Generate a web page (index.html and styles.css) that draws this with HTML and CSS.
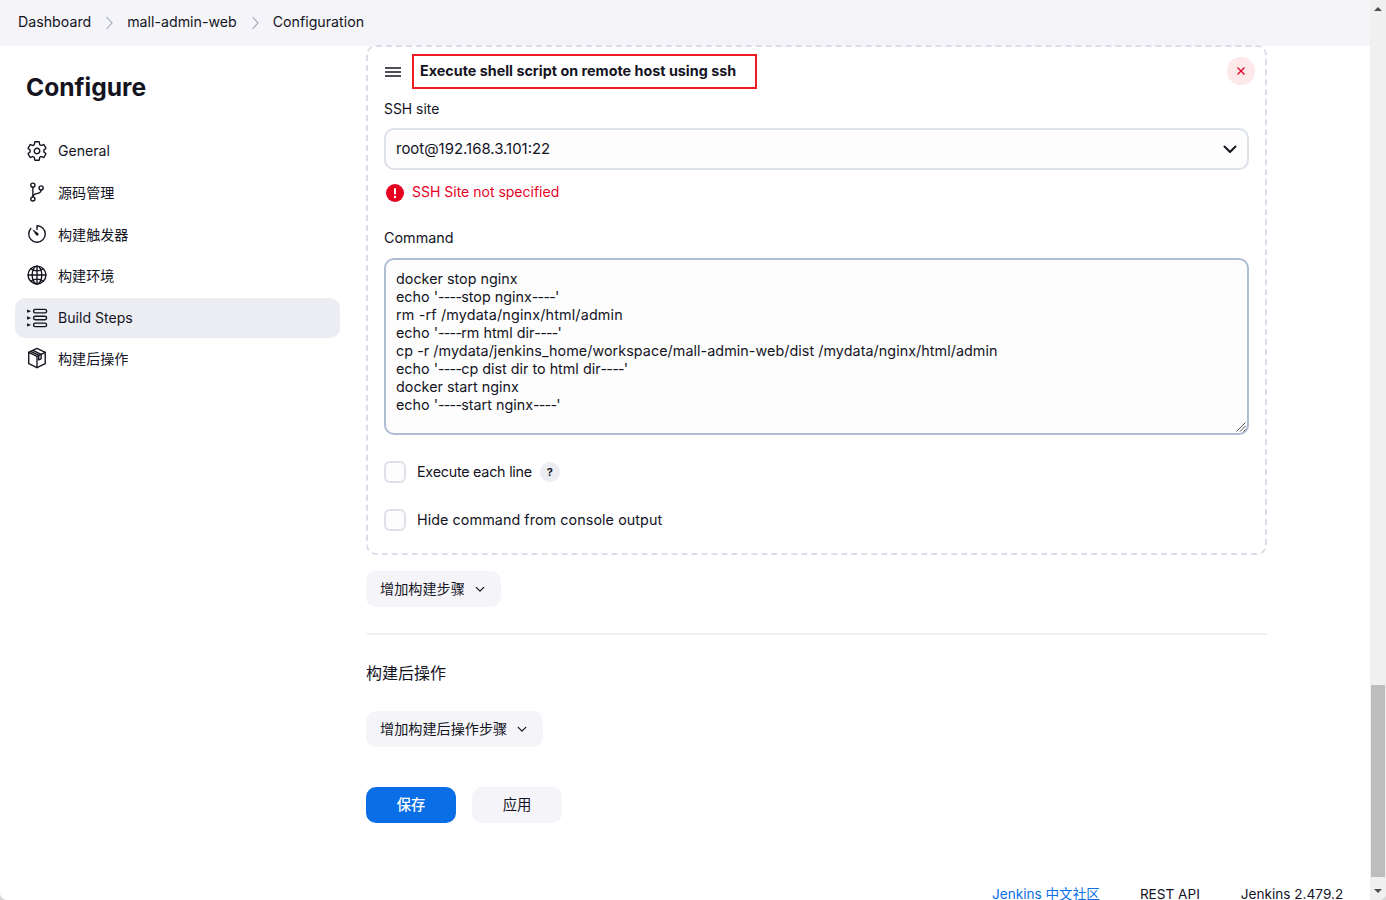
FILE: index.html
```html
<!DOCTYPE html>
<html lang="zh-CN">
<head>
<meta charset="utf-8">
<title>mall-admin-web Config</title>
<link rel="stylesheet" href="styles.css">
</head>
<body>
<div class="window">
  <div class="page">
    <nav class="crumbs">
      <a class="crumb">Dashboard</a>
      <svg class="crumb-sep" viewBox="0 0 512 512"><path d="M176 64l176 192-176 192"/></svg>
      <a class="crumb">mall-admin-web</a>
      <svg class="crumb-sep" viewBox="0 0 512 512"><path d="M176 64l176 192-176 192"/></svg>
      <a class="crumb">Configuration</a>
    </nav>
    <div class="columns">
      <aside class="sidebar">
        <h1 class="title">Configure</h1>
        <ul class="menu">
          <li class="menu-item">
            <svg class="menu-icon" viewBox="0 0 512 512"><path d="M262.29 192.31a64 64 0 1057.4 57.4 64.13 64.13 0 00-57.4-57.4zM416.39 256a154.34 154.34 0 01-1.53 20.79l45.21 35.46a10.81 10.81 0 012.45 13.75l-42.77 74a10.81 10.81 0 01-13.14 4.59l-44.9-18.08a16.11 16.11 0 00-15.17 1.75A164.48 164.48 0 01325 400.8a15.94 15.94 0 00-8.82 12.14l-6.73 47.89a11.08 11.08 0 01-10.68 9.17h-85.54a11.11 11.11 0 01-10.69-8.87l-6.72-47.82a16.07 16.07 0 00-9-12.22 155.3 155.3 0 01-21.46-12.57 16 16 0 00-15.11-1.71l-44.89 18.07a10.81 10.81 0 01-13.14-4.58l-42.77-74a10.8 10.8 0 012.45-13.75l38.21-30a16.05 16.05 0 006-14.08c-.36-4.17-.58-8.33-.58-12.5s.21-8.27.58-12.35a16 16 0 00-6.07-13.94l-38.19-30A10.81 10.81 0 0149.48 186l42.77-74a10.81 10.81 0 0113.14-4.59l44.9 18.08a16.11 16.11 0 0015.17-1.75A164.48 164.48 0 01187 111.2a15.94 15.94 0 008.82-12.14l6.73-47.89A11.08 11.08 0 01213.23 42h85.54a11.11 11.11 0 0110.69 8.87l6.72 47.82a16.07 16.07 0 009 12.22 155.3 155.3 0 0121.46 12.57 16 16 0 0015.11 1.71l44.89-18.07a10.81 10.81 0 0113.14 4.58l42.77 74a10.8 10.8 0 01-2.45 13.75l-38.21 30a16.05 16.05 0 00-6.05 14.08c.33 4.14.55 8.3.55 12.47z"/></svg>
            General
          </li>
          <li class="menu-item">
            <svg class="menu-icon" viewBox="0 0 512 512"><circle cx="160" cy="96" r="48"/><circle cx="160" cy="416" r="48"/><path d="M160 368V144"/><circle cx="352" cy="160" r="48"/><path d="M352 208c0 128-192 48-192 160"/></svg>
            源码管理
          </li>
          <li class="menu-item">
            <svg class="menu-icon" viewBox="0 0 512 512"><path d="M112.91 128A191.85 191.85 0 0064 254c-1.18 106.35 85.65 193.8 192 194 106.2.2 192-85.83 192-192 0-104.54-83.55-189.61-187.5-192a4.36 4.36 0 00-4.5 4.37V152"/><path class="solid" d="M233.38 278.63l-79-113a8.13 8.13 0 0111.32-11.32l113 79a32.5 32.5 0 01-37.25 53.26 33.21 33.21 0 01-8.07-7.94z"/></svg>
            构建触发器
          </li>
          <li class="menu-item">
            <svg class="menu-icon" viewBox="0 0 512 512"><path d="M256 48C141.13 48 48 141.13 48 256s93.13 208 208 208 208-93.13 208-208S370.87 48 256 48z"/><path d="M256 48c-58.07 0-112.67 93.13-112.67 208S197.93 464 256 464s112.67-93.13 112.67-208S314.07 48 256 48z"/><path d="M117.33 117.33c38.24 27.15 86.38 43.34 138.67 43.34s100.43-16.19 138.67-43.34M394.67 394.67c-38.24-27.15-86.38-43.34-138.67-43.34s-100.43 16.19-138.67 43.34"/><path d="M256 48v416M464 256H48"/></svg>
            构建环境
          </li>
          <li class="menu-item menu-item-active">
            <svg class="menu-icon" viewBox="0 0 512 512"><rect x="176" y="56" width="304" height="80" rx="40"/><rect x="176" y="216" width="304" height="80" rx="40"/><rect x="176" y="376" width="304" height="80" rx="40"/><path class="solid" d="M24 56l96 40-96 40zM24 216l96 40-96 40zM24 376l96 40-96 40z"/></svg>
            Build Steps
          </li>
          <li class="menu-item">
            <svg class="menu-icon" viewBox="0 0 512 512"><path d="M256 32l192 92v264l-192 92-192-92V124z"/><path d="M64 124l192 92 192-92M256 216v264"/><path d="M160 78l192 92v104l-56 26V190L104 100"/></svg>
            构建后操作
          </li>
        </ul>
      </aside>
      <main class="content">
        <section class="step">
          <div class="step-head">
            <svg class="handle" viewBox="0 0 16 10"><path d="M0 1h16M0 5h16M0 9h16"/></svg>
            <div class="step-title">Execute shell script on remote host using ssh</div>
            <button class="close" type="button">
              <svg class="close-icon" viewBox="0 0 10 10"><path d="M1.500 1.500l7 7M8.500 1.500l-7 7"/></svg>
            </button>
          </div>
          <div class="label">SSH site</div>
          <div class="select">
            <span class="select-value">root@192.168.3.101:22</span>
            <svg class="select-arrow" viewBox="0 0 14 9"><path d="M1.500 1.500L7 7l5.500-5.500"/></svg>
          </div>
          <div class="error">
            <svg class="error-icon" viewBox="0 0 18 18"><circle cx="9" cy="9" r="9"/><rect x="8" y="4" width="2" height="6.500" rx="1"/><circle cx="9" cy="13" r="1.200"/></svg>
            SSH Site not specified
          </div>
          <div class="label label-command">Command</div>
          <div class="textarea">
            <div>docker stop nginx</div>
            <div>echo '<span class="dashes">----</span>stop nginx<span class="dashes">----</span>'</div>
            <div class="path-long">rm -rf /mydata/nginx/html/admin</div>
            <div>echo '<span class="dashes">----</span>rm html dir<span class="dashes">----</span>'</div>
            <div class="path-wide">cp -r /mydata/jenkins_home/workspace/mall-admin-web/dist /mydata/nginx/html/admin</div>
            <div>echo '<span class="dashes">----</span>cp dist dir to html dir<span class="dashes">----</span>'</div>
            <div>docker start nginx</div>
            <div>echo '<span class="dashes">----</span>start nginx<span class="dashes">----</span>'</div>
            <svg class="grip" viewBox="0 0 10 10"><path d="M9.500 .5l-9 9M9.500 4l-5.500 5.500M9.500 7.500l-2 2"/></svg>
          </div>
          <label class="check"><span class="box"></span><span class="check-tight">Execute each line</span><span class="help">?</span></label>
          <label class="check check-wide"><span class="box"></span>Hide command from console output</label>
        </section>
        <button class="add-btn add-first" type="button">增加构建步骤<svg class="add-arrow" viewBox="0 0 12 8"><path d="M1.500 1.500L6 6l4.500-4.500"/></svg></button>
        <hr class="rule">
        <h2 class="section-title">构建后操作</h2>
        <button class="add-btn" type="button">增加构建后操作步骤<svg class="add-arrow" viewBox="0 0 12 8"><path d="M1.500 1.500L6 6l4.500-4.500"/></svg></button>
        <div class="actions">
          <button class="action action-primary" type="button">保存</button>
          <button class="action" type="button">应用</button>
        </div>
      </main>
    </div>
    <footer class="footer">
      <a class="footer-link">Jenkins 中文社区</a>
      <span class="footer-rest">REST API</span>
      <span class="footer-ver">Jenkins 2.479.2</span>
    </footer>
  </div>
  <div class="scrollbar">
    <span class="sb-up"></span>
    <span class="sb-thumb"></span>
    <span class="sb-down"></span>
  </div>
</div>
</body>
</html>
```
FILE: styles.css
```css
* { box-sizing: border-box; }
html, body { margin: 0; height: 900px; overflow: hidden; background: #d4d4d4; }
body {
  font-family: Inter, "Noto Sans CJK SC", sans-serif;
  font-size: 14.35px;
  color: #14141f;
}
.window { display: flex; width: 1386px; height: 900px; overflow: hidden; background: #fff; border-radius: 0 0 7px 7px; }
.page { width: 1370px; height: 900px; display: flex; flex-direction: column; overflow: hidden; }

.crumbs {
  height: 46px; flex: none; display: flex; align-items: center; padding: 0 0 2px 18px;
  background: #f5f5f9; font-size: 14.2px;
}
.crumb { line-height: 1; }
.crumb-sep { width: 16px; height: 16px; margin: 2px 10px 0; fill: none; stroke: #98a2b6; stroke-width: 34; }

.columns { display: flex; flex: none; height: 825px; }
.sidebar { width: 366px; flex: none; padding: 0 26px 0 15px; font-size: 14.1px; }
.title { margin: 25px 0 29px 11px; font-size: 24.6px; line-height: 32px; font-weight: 700; }
.menu { list-style: none; margin: 0; padding: 0; display: flex; flex-direction: column; gap: 1.6px; }
.menu-item {
  height: 40px; display: flex; align-items: center; padding: 0 0 3px 11px; border-radius: 10px;
}
.menu-item-active { background: #ecedf3; padding-bottom: 1px; }
.menu-icon { width: 22px; height: 22px; margin-right: 10px; flex: none; fill: none; stroke: #14141f; stroke-width: 32; stroke-linecap: round; stroke-linejoin: round; }
.solid { fill: #14141f; stroke: none; }

.content { width: 901px; flex: none; }
.step {
  height: 510px; border: 2px dashed #d9deea; border-radius: 10px; padding: 7px 16px 0;
  margin-top: -1px;
}
.step-head { display: flex; align-items: center; height: 35px; }
.handle { width: 16px; height: 10px; margin-left: 1px; fill: none; stroke: #14141f; stroke-width: 1.300; }
.step-title {
  width: 345px; height: 35px; margin-left: 11px; padding-left: 6px; border: 2px solid #ed1c24;
  font-weight: 700; line-height: 29px;
}
.close {
  width: 28px; height: 28px; margin: 0 -6px 1px auto; border: 0; border-radius: 50%;
  background: #fde8ea; display: flex; align-items: center; justify-content: center; padding: 0;
}
.close-icon { width: 10px; height: 10px; fill: none; stroke: #e6001f; stroke-width: 1.300; }
.label { line-height: 20px; margin-top: 10px; font-size: 13.9px; }
.select {
  height: 42px; margin-top: 9px; border: 2px solid #dde1ea; border-radius: 10px; background: #fdfdfd;
  display: flex; align-items: center; justify-content: space-between; padding: 0 10px;
}
.select-value { font-size: 14.95px; }
.select-arrow { width: 14px; height: 9px; fill: none; stroke: #14141f; stroke-width: 2; stroke-linecap: round; stroke-linejoin: round; }
.error { display: flex; align-items: center; height: 20px; margin-top: 12px; color: #e6001f; padding: 0 0 2px 2px; font-size: 14px; }
.error-icon { width: 18px; height: 18px; margin: 3px 8px 0 0; fill: #e6001f; }
.error-icon rect, .error-icon circle + rect + circle { fill: #fff; }
.label-command { margin-top: 26px; font-size: 14.35px; }
.textarea {
  position: relative; height: 177px; margin-top: 10px; border: 2px solid #aebdd3; border-radius: 10px;
  background: #fdfdfd; padding: 10px 10px; line-height: 18px;
}
.dashes { letter-spacing: -.8px; }
.path-long { letter-spacing: .16px; }
.path-wide { letter-spacing: .05px; }
.grip { position: absolute; right: 1px; bottom: 1px; width: 10px; height: 10px; fill: none; stroke: #555; stroke-width: 1; }
.check { display: flex; align-items: center; height: 22px; margin-top: 26px; padding-bottom: 1px; }
.check-tight { letter-spacing: -.25px; }
.check-wide { letter-spacing: .06px; }
.box { width: 22px; height: 22px; margin: 1px 11px 0 0; border: 2px solid #dde1ea; border-radius: 6px; background: #fdfdfd; flex: none; }
.help {
  width: 20px; height: 20px; margin: 1px 0 0 8px; border-radius: 50%; background: #ecedf3;
  display: flex; align-items: center; justify-content: center; font-size: 11px; font-weight: 700;
}
.add-btn {
  display: flex; align-items: center; height: 36px; padding: 0 16px 2px 14px; border: 0; border-radius: 10px; background: #f5f5f9;
  font: inherit; font-size: 14.15px; color: inherit;
}
.add-first { margin-top: 16px; }
.add-arrow { width: 10px; height: 7px; margin: 2px 0 0 10px; fill: none; stroke: #14141f; stroke-width: 1.500; stroke-linecap: round; stroke-linejoin: round; }
.rule { margin: 26px 0 0; height: 2px; border: 0; background: #f2f2f6; }
.section-title { margin: 26px 0 0; font-size: 16px; font-weight: 400; line-height: 24px; }
.section-title + .add-btn { margin-top: 26px; }
.actions { display: flex; gap: 16px; margin-top: 40px; }
.action {
  width: 90px; height: 36px; border: 0; border-radius: 10px; background: #f5f5f9; font: inherit; color: inherit; padding: 0 0 3px;
}
.action-primary { background: #0a6ee6; color: #fff; font-weight: 500; }

.footer { flex: none; height: 29px; display: flex; align-items: flex-end; font-size: 13.6px; line-height: 12px; }
.footer-link { margin-left: 992px; color: #0a6ee6; }
.footer-rest { margin-left: 40px; }
.footer-ver { margin-left: 41px; }

.scrollbar { width: 16px; height: 900px; flex: none; background: #f0f0f0; position: relative; }
.sb-up, .sb-down, .sb-thumb { position: absolute; display: block; }
.sb-up { left: 4px; top: 7px; border: 4px solid transparent; border-top: 0; border-bottom: 4px solid #505050; }
.sb-down { left: 4px; top: 889px; border: 4px solid transparent; border-bottom: 0; border-top: 4px solid #505050; }
.sb-thumb { left: 1px; top: 685px; width: 14px; height: 192px; background: #bdbdbd; }
```
